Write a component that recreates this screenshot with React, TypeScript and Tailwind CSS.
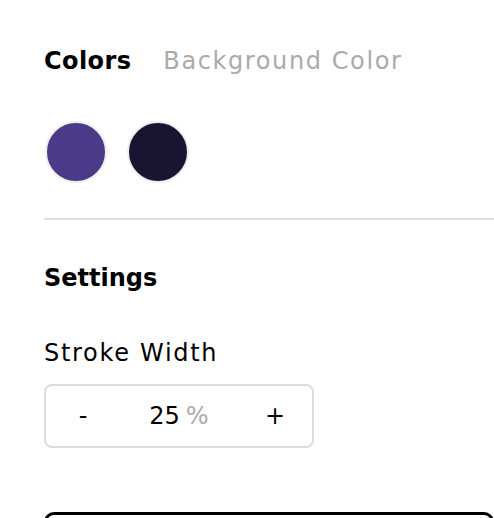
import { useState } from "react";

const swatches = ["#4a3a87", "#1a1433"];

export default function App() {
  const [tab, setTab] = useState<"colors" | "background">("colors");
  const [stroke, setStroke] = useState(25);

  return (
    <div
      className="w-[494px] h-[518px] overflow-hidden bg-white pl-[44px] text-black"
      style={{ fontFamily: '"DejaVu Sans", "Noto Sans", sans-serif' }}
    >
      {/* Tabs */}
      <div className="flex items-baseline gap-[32px] pt-[44px] text-[24px] leading-[34px]">
        <button
          onClick={() => setTab("colors")}
          className={tab === "colors" ? "font-bold tracking-[0.4px] text-black" : "tracking-[1.6px] text-[#aaaaaa]"}
        >
          Colors
        </button>
        <button
          onClick={() => setTab("background")}
          className={tab === "background" ? "font-bold tracking-[0.4px] text-black" : "tracking-[1.6px] text-[#aaaaaa]"}
        >
          Background Color
        </button>
      </div>

      {/* Swatches */}
      <div className="flex gap-[20px] pt-[43px] pl-[1px]">
        {swatches.map((c) => (
          <div
            key={c}
            className="w-[62px] h-[62px] rounded-full border-[2px] border-[#eeeeee]"
            style={{ backgroundColor: c }}
          />
        ))}
      </div>

      <div className="mt-[35px] h-[2px] bg-[#dddddd]" />

      {/* Settings */}
      <div className="pt-[41px] text-[24px] leading-[34px] font-bold">Settings</div>
      <div className="pt-[41px] text-[24px] leading-[34px] tracking-[1.7px]">Stroke Width</div>

      <div className="mt-[14px] flex h-[64px] w-[270px] items-center rounded-[8px] border-[2px] border-[#dddddd] text-[24px]">
        <button
          onClick={() => setStroke((s) => Math.max(0, s - 1))}
          className="w-[74px] text-center"
        >
          -
        </button>
        <div className="flex-1 text-center">
          {stroke}
          <span className="ml-[6px] text-[#aaaaaa]">%</span>
        </div>
        <button
          onClick={() => setStroke((s) => Math.min(100, s + 1))}
          className="w-[74px] text-center"
        >
          +
        </button>
      </div>

      <div className="mt-[64px] h-[60px] rounded-t-[10px] border-[3px] border-black" />
    </div>
  );
}
